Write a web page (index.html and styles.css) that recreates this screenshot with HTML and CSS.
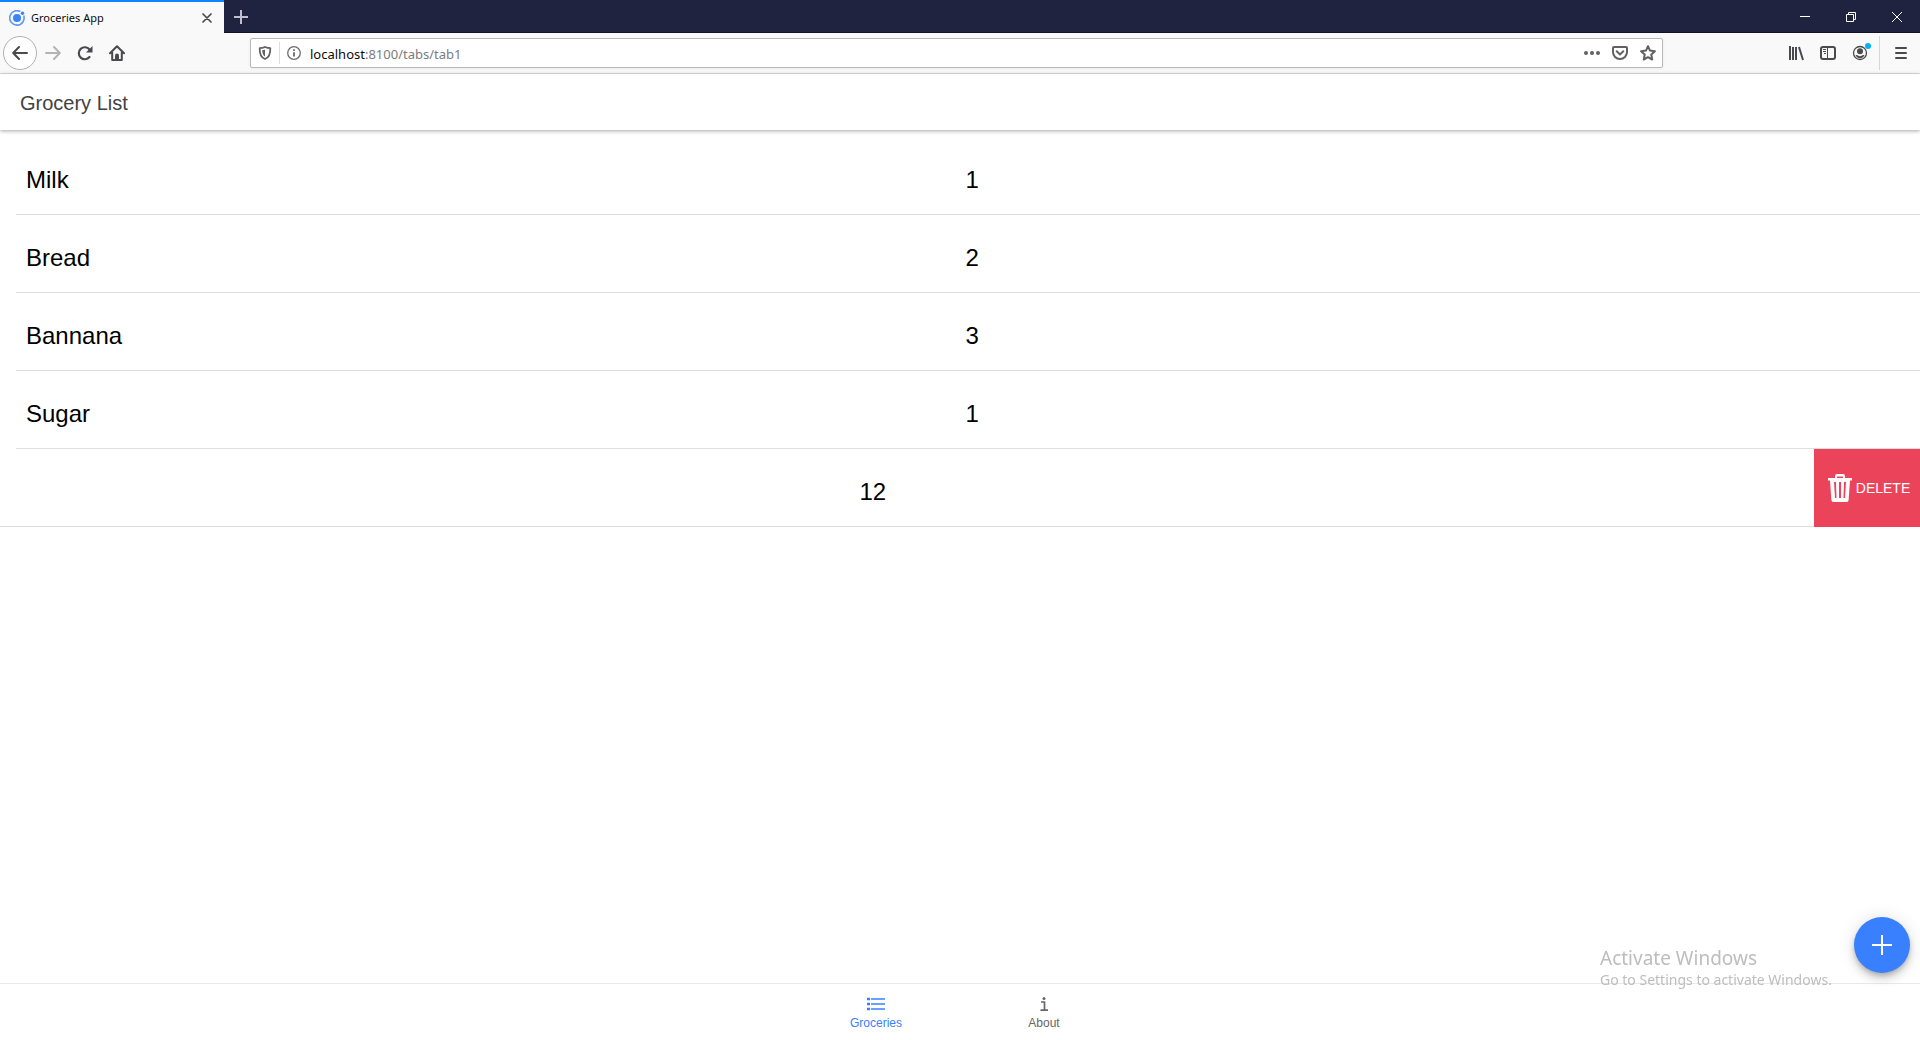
FILE: index.html
```html
<!DOCTYPE html>
<html lang="en">
<head>
<meta charset="utf-8">
<title>Groceries App</title>
<link rel="stylesheet" href="styles.css">
</head>
<body>
<div class="tabstrip">
  <div class="tab">
    <svg class="favicon" width="16" height="16" viewBox="0 0 16 16"><circle cx="8" cy="8" r="4" fill="#3b82ff"/><circle cx="13.500" cy="3.200" r="1.700" fill="#3b82ff"/><path d="M11.300 1.600A7.200 7.200 0 1 0 14.700 5.600" fill="none" stroke="#5a97ff" stroke-width="1.600"/></svg>
    <span class="tab-title">Groceries App</span>
    <button class="tab-close" aria-label="Close tab"><svg width="10" height="10" viewBox="0 0 10 10"><path d="M1 1l8 8M9 1l-8 8" stroke="#4a4a4d" stroke-width="1.700" stroke-linecap="round"/></svg></button>
  </div>
  <button class="new-tab" aria-label="New tab"><svg width="14" height="14" viewBox="0 0 14 14"><path d="M7 0v14M0 7h14" stroke="#bfc0cc" stroke-width="2"/></svg></button>
  <div class="window-buttons">
    <button aria-label="Minimize"><svg width="10" height="10" viewBox="0 0 10 10"><path d="M0 4.500h10" stroke="#fff"/></svg></button>
    <button aria-label="Restore"><svg width="10" height="10" viewBox="0 0 10 10"><path d="M.5 2.500h7v7h-7zM2.500 2.500v-2h7v7h-2" fill="none" stroke="#fff"/></svg></button>
    <button aria-label="Close"><svg width="10" height="10" viewBox="0 0 10 10"><path d="M0 0l10 10M10 0L0 10" stroke="#fff"/></svg></button>
  </div>
</div>
<div class="navbar">
  <button class="back" aria-label="Back"><svg width="16" height="16" viewBox="0 0 16 16"><path d="M15 8H1.500M7 2L1.200 8 7 14" fill="none" stroke="#4a4a4d" stroke-width="2" stroke-linecap="round" stroke-linejoin="round"/></svg></button>
  <button class="tool" aria-label="Forward"><svg width="16" height="16" viewBox="0 0 16 16"><path d="M1 8h13.500M9 2l5.800 6L9 14" fill="none" stroke="#b4b4b5" stroke-width="2" stroke-linecap="round" stroke-linejoin="round"/></svg></button>
  <button class="tool" aria-label="Reload"><svg width="16" height="16" viewBox="0 0 16 16"><path d="M12.500 12A6 6 0 1 1 12.500 4.500" fill="none" stroke="#4a4a4d" stroke-width="2.200" stroke-linecap="round"/><path d="M15.500 1v6.500H9z" fill="#4a4a4d"/></svg></button>
  <button class="tool" aria-label="Home"><svg width="16" height="16" viewBox="0 0 16 16"><path d="M1 8.300L8 1.300l7 7M3.200 7.500V15h9.600V7.500" fill="none" stroke="#4a4a4d" stroke-width="2" stroke-linecap="round" stroke-linejoin="round"/><path d="M6 15v-4.500a2 2 0 0 1 4 0V15z" fill="#4a4a4d"/></svg></button>
  <div class="urlbar">
    <svg class="shield" width="14" height="14" viewBox="0 0 14 14"><path d="M7 1c2 .9 3.700 1.200 5.300 1.200C12.500 7.500 11.500 11.300 7 13 2.500 11.300 1.500 7.500 1.700 2.200 3.300 2.200 5 1.900 7 1z" fill="none" stroke="#616163" stroke-width="1.800" stroke-linejoin="round"/><path d="M7 3.600v6.900C5 9.400 4.300 7.400 4.200 4.300 5.200 4.200 6.200 4 7 3.600z" fill="#616163"/></svg>
    <span class="url-divider"></span>
    <svg class="info" width="14" height="14" viewBox="0 0 14 14"><circle cx="7" cy="7" r="6.300" fill="none" stroke="#6b6b6d" stroke-width="1.300"/><path d="M7 6.200v4.300M7 3.200v1.800" stroke="#6b6b6d" stroke-width="1.800"/></svg>
    <p class="address"><span class="host">localhost</span>:8100/tabs/tab1</p>
    <button class="url-action" aria-label="Page actions"><svg width="16" height="16" viewBox="0 0 16 16"><g fill="#616163"><circle cx="2" cy="8" r="2"/><circle cx="8" cy="8" r="2"/><circle cx="14" cy="8" r="2"/></g></svg></button>
    <button class="url-action" aria-label="Save to Pocket"><svg width="16" height="16" viewBox="0 0 16 16"><path d="M2 2h12a1 1 0 0 1 1 1v4a7 7 0 0 1-14 0V3a1 1 0 0 1 1-1z" fill="none" stroke="#616163" stroke-width="2"/><path d="M4.700 6.300L8 9.500l3.300-3.200" fill="none" stroke="#616163" stroke-width="2" stroke-linecap="round" stroke-linejoin="round"/></svg></button>
    <button class="url-action" aria-label="Bookmark"><svg width="16" height="16" viewBox="0 0 16 16"><path d="M8 1.200l2 4.400 4.900.6-3.600 3.400.9 4.900L8 12.200l-4.200 2.300.9-4.900L1.100 6.200 6 5.600z" fill="none" stroke="#616163" stroke-width="2" stroke-linejoin="round"/></svg></button>
  </div>
  <button class="tool" aria-label="Library"><svg width="16" height="16" viewBox="0 0 16 16"><path d="M2 1v14M5 2v13M8 2v13M11 2l4 13" fill="none" stroke="#4a4a4d" stroke-width="2"/></svg></button>
  <button class="tool" aria-label="Sidebars"><svg width="16" height="16" viewBox="0 0 16 16"><rect x="1" y="2" width="14" height="12" rx="2" fill="none" stroke="#4a4a4d" stroke-width="2"/><path d="M7.500 2v12M3 4.500h3M3 6.500h3M4 8.500h2" stroke="#4a4a4d"/></svg></button>
  <button class="tool account" aria-label="Account"><svg width="16" height="16" viewBox="0 0 16 16"><circle cx="8" cy="8" r="6.500" fill="none" stroke="#4a4a4d" stroke-width="1.300"/><circle cx="8" cy="6.200" r="3" fill="#4a4a4d"/><path d="M3.500 10.200c1.200-.5 2-.2 2.500.4 1.200.8 2.800.8 4 0 .5-.6 1.300-.9 2.500-.4-1 2-2.500 3-4.500 3s-3.500-1-4.500-3z" fill="#4a4a4d"/></svg><span class="account-dot"></span></button>
  <span class="nav-divider"></span>
  <button class="tool" aria-label="Menu"><svg width="16" height="16" viewBox="0 0 16 16"><path d="M3 3h10M3 8h10M3 13h10" stroke="#4a4a4d" stroke-width="2" stroke-linecap="round"/></svg></button>
</div>

<header class="app-header"><h1>Grocery List</h1></header>

<main class="content">
  <ul class="list">
    <li class="slide"><div class="item"><div class="item-row"><span>Milk</span><span>1</span></div></div></li>
    <li class="slide"><div class="item"><div class="item-row"><span>Bread</span><span>2</span></div></div></li>
    <li class="slide"><div class="item"><div class="item-row"><span>Bannana</span><span>3</span></div></div></li>
    <li class="slide"><div class="item"><div class="item-row"><span>Sugar</span><span>1</span></div></div></li>
    <li class="slide open">
      <div class="item"><div class="item-row"><span></span><span>12</span></div></div>
      <button class="delete"><svg width="24" height="28" viewBox="0 0 24 28"><path d="M0 4h7V2a2 2 0 0 1 2-2h6a2 2 0 0 1 2 2v2h7v2.500h-2L20.600 26a2 2 0 0 1-2 2H5.400a2 2 0 0 1-2-2L2 6.500H0zM9 2.500V4h6V2.500zM6 8l1 16h1.500L8 8zM11 8v16h2V8zM16 8l-.5 16H17l1-16z" fill="#fff" fill-rule="evenodd"/></svg>DELETE</button>
    </li>
  </ul>
</main>

<footer class="tabbar">
  <a class="tab-button selected" href="#groceries"><svg width="18" height="18" viewBox="0 0 18 18"><path d="M0 4h3M0 9h3M0 14h3" stroke="#3880ff" stroke-width="2.500"/><path d="M4 4h14M4 9h14M4 14h14" stroke="#3880ff" stroke-width="1.300"/></svg>Groceries</a>
  <a class="tab-button" href="#about"><svg width="18" height="18" viewBox="0 0 18 18"><circle cx="9" cy="3.500" r="1.500" fill="#666"/><path d="M6 7h3.500v8.500M5.500 15.200h7.500" fill="none" stroke="#666" stroke-width="1.700"/></svg>About</a>
</footer>

<button class="fab" aria-label="Add item"><svg width="20" height="20" viewBox="0 0 20 20"><path d="M10 0v20M0 10h20" stroke="#fff" stroke-width="2"/></svg></button>
<div class="watermark"><p class="watermark-title">Activate Windows</p><p>Go to Settings to activate Windows.</p></div>
</body>
</html>
```
FILE: styles.css
```css
* { box-sizing: border-box; }
body {
  margin: 0;
  min-height: 100vh;
  display: flex;
  flex-direction: column;
  background: #fff;
  font-family: "Liberation Sans", Arial, sans-serif;
  overflow-x: hidden;
}
button { border: 0; padding: 0; background: none; font: inherit; display: flex; align-items: center; justify-content: center; }
svg { display: block; flex: none; }
p, h1, ul { margin: 0; padding: 0; }

.tabstrip { display: flex; height: 33px; background: #202340; box-shadow: inset 0 -1px #10122a; }
.tab {
  display: flex;
  align-items: center;
  width: 224px;
  padding: 0 12px 0 9px;
  background: #f9f9fa;
  border-top: 2px solid #0a84ff;
  font: 11px/16px "Noto Sans", sans-serif;
  color: #0c0c0d;
}
.tab-title { flex: 1; margin-left: 6px; }
.new-tab { width: 34px; }
.window-buttons { display: flex; margin-left: auto; }
.window-buttons button { width: 46px; }

.navbar {
  display: flex;
  align-items: center;
  height: 41px;
  padding: 0 3px;
  background: #f9f9fa;
  border-bottom: 1px solid #e0e0e1;
}
.back { width: 34px; height: 34px; border: 1px solid #b1b1b3; border-radius: 50%; background: #fff; }
.tool { width: 32px; height: 32px; }
.urlbar {
  flex: 1;
  display: flex;
  align-items: center;
  height: 30px;
  margin: 0 117px;
  padding: 0 0 0 7px;
  background: #fff;
  border: 1px solid #b8b8bb;
  border-radius: 2px;
  box-shadow: 0 1px 3px rgba(0, 0, 0, 0.06);
}
.url-divider { width: 1px; height: 22px; margin: 0 7px; background: #dcdcdd; }
.address { flex: 1; margin-left: 9px; padding-top: 1px; font: 13px/18px "Noto Sans", sans-serif; color: #7c7c7e; }
.host { color: #0c0c0d; }
.url-action { width: 28px; height: 28px; }
.account { position: relative; }
.account-dot { position: absolute; top: 6px; right: 5px; width: 6px; height: 6px; border-radius: 50%; background: #00b3f4; }
.nav-divider { width: 1px; height: 34px; margin: 0 5px 0 3px; background: #d7d7d8; }

.app-header {
  display: flex;
  align-items: center;
  height: 56px;
  padding: 2px 20px 0;
  background: #fff;
  box-shadow: 0 1px 4px rgba(0, 0, 0, 0.35);
}
.app-header h1 { font-size: 20px; line-height: 24px; font-weight: 400; color: #424242; }

.content { flex: 1; padding: 7px 0; }
.list { list-style: none; }
.slide { display: flex; overflow: hidden; }
.item { flex: none; width: 100%; padding-left: 16px; }
.item-row {
  display: grid;
  grid-template-columns: 1fr 1fr;
  height: 78px;
  padding: 29px 20px 0 5px;
  border-bottom: 1px solid #dedede;
  font-size: 24px;
  line-height: 28px;
}
.item-row span { padding: 0 5px; }
.open .item { margin-left: -106px; }
.delete { width: 106px; gap: 4px; padding-left: 4px; background: #eb445a; color: #fff; font-size: 14px; }

.tabbar { display: flex; justify-content: center; height: 57px; border-top: 1px solid #e9e9e9; background: #fff; }
.tab-button {
  display: flex;
  flex-direction: column;
  align-items: center;
  width: 168px;
  padding-top: 11px;
  gap: 2px;
  font-size: 12px;
  line-height: 16px;
  color: #666;
  text-decoration: none;
}
.tab-button.selected { color: #3880ff; }

.fab {
  position: fixed;
  right: 10px;
  bottom: 67px;
  width: 56px;
  height: 56px;
  border-radius: 50%;
  background: #3880ff;
  box-shadow: 0 3px 5px -1px rgba(0, 0, 0, 0.2), 0 6px 10px rgba(0, 0, 0, 0.14), 0 1px 18px rgba(0, 0, 0, 0.12);
}
.watermark { position: fixed; right: 84px; bottom: 51px; width: 236px; font: 14px/18px "Noto Sans", sans-serif; color: #bdbdbd; white-space: nowrap; }
.watermark-title { font-size: 19px; line-height: 26px; }
```
